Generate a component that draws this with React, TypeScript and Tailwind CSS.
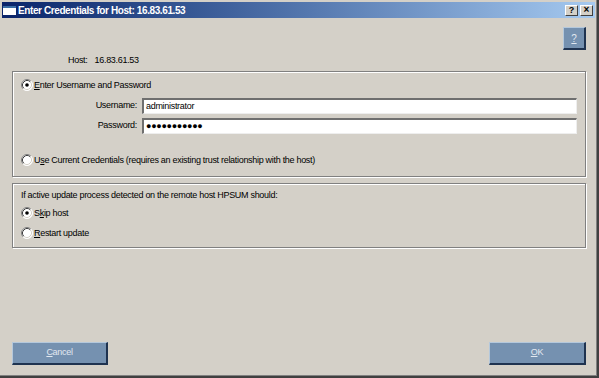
import type { ReactNode } from 'react'

function Radio({ checked }: { checked?: boolean }) {
  return (
    <svg width="12" height="12" viewBox="0 0 12 12" className="shrink-0">
      <circle cx="6" cy="6" r="5.5" fill="#fff" />
      <path d="M2.11 9.89 A5.5 5.5 0 0 1 9.89 2.11" fill="none" stroke="#808080" strokeWidth="1" />
      <path d="M9.89 2.11 A5.5 5.5 0 0 1 2.11 9.89" fill="none" stroke="#ffffff" strokeWidth="1" />
      <path d="M2.82 9.18 A4.5 4.5 0 0 1 9.18 2.82" fill="none" stroke="#404040" strokeWidth="1" />
      <path d="M9.18 2.82 A4.5 4.5 0 0 1 2.82 9.18" fill="none" stroke="#d4d0c8" strokeWidth="1" />
      {checked && <circle cx="6" cy="6" r="1.8" fill="#000" />}
    </svg>
  )
}

function Option({ checked, children }: { checked?: boolean; children: ReactNode }) {
  return (
    <div className="flex items-center h-[12px]">
      <Radio checked={checked} />
      <span className="ml-[1px] leading-none">{children}</span>
    </div>
  )
}

function Field({ label, value, dots }: { label: ReactNode; value: string; dots?: boolean }) {
  return (
    <div className="flex items-center gap-[5px]">
      <span className="w-[116px] text-right">{label}</span>
      <div className="flex-1 h-[16px] bg-white border-t-2 border-l-2 border-t-[#6f6f6f] border-l-[#6f6f6f] border-b border-r border-b-[#eeeeee] border-r-[#eeeeee] flex items-center px-[2px]">
        <span className={dots ? 'text-[9px] tracking-[-0.3px] leading-none' : 'leading-none'}>{value}</span>
      </div>
    </div>
  )
}

function BlueButton({ children, className = '' }: { children: ReactNode; className?: string }) {
  return (
    <button className={`h-[23px] bg-[#7591b0] border-t border-l border-t-[#b4c8dc] border-l-[#b4c8dc] border-b-2 border-r-2 border-b-[#1f3350] border-r-[#1f3350] text-[#e2e8f0] flex items-center justify-center ${className}`}>
      {children}
    </button>
  )
}

const group = 'border border-[#808080] shadow-[inset_1px_1px_0_#ffffff,1px_1px_0_#ffffff]'

export default function App() {
  return (
    <div className="w-[599px] h-[378px] bg-[#d4d0c8] border-r-2 border-b-2 border-[#404040] font-['Liberation_Sans',Arial,sans-serif] text-[9px] tracking-[-0.3px] text-black">
      <div className="h-full flex flex-col pl-[2px] pt-[2px] pr-px border-r border-b border-[#808080]">
        <div className="h-[16px] shrink-0 flex items-center bg-gradient-to-r from-[#0a246a] to-[#a6caf0] pl-[1px] pr-[2px]">
          <div className="w-[13px] h-[9px] bg-white border-t-2 border-[#3a6ea5] mr-[2px]" />
          <span className="font-bold text-white text-[10px] tracking-[-0.4px]">Enter Credentials for Host: 16.83.61.53</span>
          <div className="ml-auto flex gap-[2px] tracking-normal">
            <div className="w-[13px] h-[11px] bg-[#d4d0c8] border-t border-l border-white border-b border-r border-b-[#404040] border-r-[#404040] flex items-center justify-center font-bold text-[9px] leading-none">?</div>
            <div className="w-[13px] h-[11px] bg-[#d4d0c8] border-t border-l border-white border-b border-r border-b-[#404040] border-r-[#404040] flex items-center justify-center font-bold text-[10px] leading-none">×</div>
          </div>
        </div>

        <div className="flex-1 flex flex-col pl-[10px] pr-[9px] pb-[10px]">
          <div className="flex justify-end mt-[9px]">
            <BlueButton className="w-[23px]">
              <span className="underline text-[10px]">?</span>
            </BlueButton>
          </div>

          <div className="h-[11px] mt-[5px] pl-[56px] flex items-center gap-[7px]">
            <span>Host:</span>
            <span>16.83.61.53</span>
          </div>

          <div className={`${group} mt-[5px] pt-[7px] pl-[8px] pr-[8px] pb-[10px]`}>
            <Option checked>
              <span className="underline">E</span>nter Username and Password
            </Option>
            <div className="mt-[7px] flex flex-col gap-[4px]">
              <Field label="Username:" value="administrator" />
              <Field label="Password:" value="●●●●●●●●●●●" dots />
            </div>
            <div className="mt-[20px]">
              <Option>
                U<span className="underline">s</span>e Current Credentials (requires an existing trust relationship with the host)
              </Option>
            </div>
          </div>

          <div className={`${group} mt-[6px] pt-[6px] pl-[8px] pr-[8px] pb-[8px]`}>
            <div className="h-[12px] flex items-center">If active update process detected on the remote host HPSUM should:</div>
            <div className="mt-[5px]">
              <Option checked>
                S<span className="underline">k</span>ip host
              </Option>
            </div>
            <div className="mt-[8px]">
              <Option>
                <span className="underline">R</span>estart update
              </Option>
            </div>
          </div>

          <div className="mt-auto flex justify-between">
            <BlueButton className="w-[96px]">
              <span><span className="underline">C</span>ancel</span>
            </BlueButton>
            <BlueButton className="w-[97px]">
              <span><span className="underline">O</span>K</span>
            </BlueButton>
          </div>
        </div>
      </div>
    </div>
  )
}
